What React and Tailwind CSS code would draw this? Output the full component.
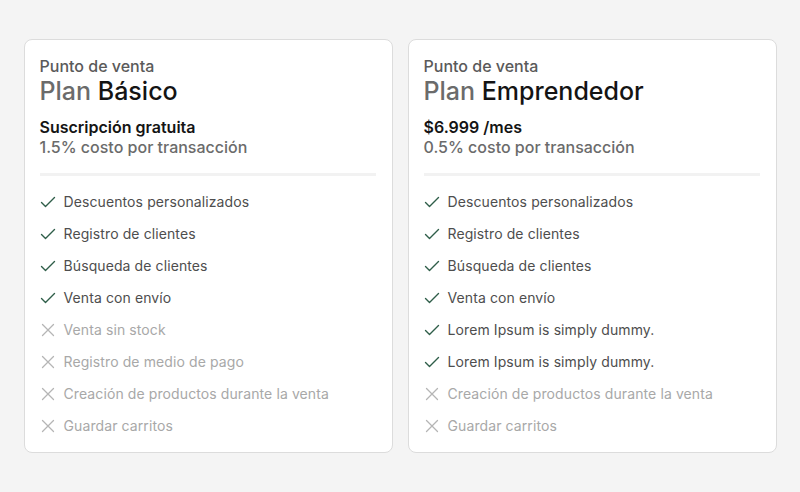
import React from 'react';

const plans = [
  {
    name: 'Básico',
    price: 'Suscripción gratuita',
    fee: '1.5% costo por transacción',
    features: [
      ['Descuentos personalizados', true],
      ['Registro de clientes', true],
      ['Búsqueda de clientes', true],
      ['Venta con envío', true],
      ['Venta sin stock', false],
      ['Registro de medio de pago', false],
      ['Creación de productos durante la venta', false],
      ['Guardar carritos', false],
    ],
  },
  {
    name: 'Emprendedor',
    price: '$6.999 /mes',
    fee: '0.5% costo por transacción',
    features: [
      ['Descuentos personalizados', true],
      ['Registro de clientes', true],
      ['Búsqueda de clientes', true],
      ['Venta con envío', true],
      ['Lorem Ipsum is simply dummy.', true],
      ['Lorem Ipsum is simply dummy.', true],
      ['Creación de productos durante la venta', false],
      ['Guardar carritos', false],
    ],
  },
];

const Check = () => (
  <svg width="16" height="16" viewBox="0 0 16 16" fill="none" className="shrink-0">
    <path d="M1.5 8.5 L5.5 12.5 L14.5 3.5" stroke="#2f5e49" strokeWidth="1.4" strokeLinecap="round" strokeLinejoin="round" />
  </svg>
);

const Cross = () => (
  <svg width="16" height="16" viewBox="0 0 16 16" fill="none" className="shrink-0">
    <path d="M2.5 2.5 L13.5 13.5 M13.5 2.5 L2.5 13.5" stroke="#b5b5b5" strokeWidth="1.3" strokeLinecap="round" />
  </svg>
);

const PlanCard = ({ plan }) => (
  <div className="w-[369px] rounded-lg border border-[#dcdcdc] bg-white pl-[15px] pr-4 pt-[16px] pb-[16px]">
    <div className="text-[16px] leading-[20px] font-medium text-[#5a5a5a]">Punto de venta</div>
    <div className="text-[25px] leading-[30px] font-medium text-[#6b6b6b]">
      Plan <span className="text-[#141414]">{plan.name}</span>
    </div>
    <div className="mt-[11px] text-[16px] leading-[20px] font-semibold text-[#141414]">{plan.price}</div>
    <div className="text-[16px] leading-[20px] font-medium text-[#6b6b6b]">{plan.fee}</div>
    <div className="mt-[16px] h-[3px] bg-[#f2f2f2]" />
    <ul className="mt-[16px] flex flex-col gap-[12px]">
      {plan.features.map(([label, ok], i) => (
        <li key={i} className="flex h-[20px] items-center gap-[8px]">
          {ok ? <Check /> : <Cross />}
          <span className={`text-[14px] leading-[20px] tracking-[0.1px] ${ok ? 'text-[#4e4e4e]' : 'text-[#a8a8a8]'}`}>{label}</span>
        </li>
      ))}
    </ul>
  </div>
);

export default function App() {
  return (
    <div className="flex min-h-[492px] w-[800px] items-start justify-center gap-[15px] bg-[#f4f4f4] pt-[39px]" style={{ fontFamily: 'Inter, "Noto Sans", sans-serif' }}>
      {plans.map((p) => (
        <PlanCard key={p.name} plan={p} />
      ))}
    </div>
  );
}
